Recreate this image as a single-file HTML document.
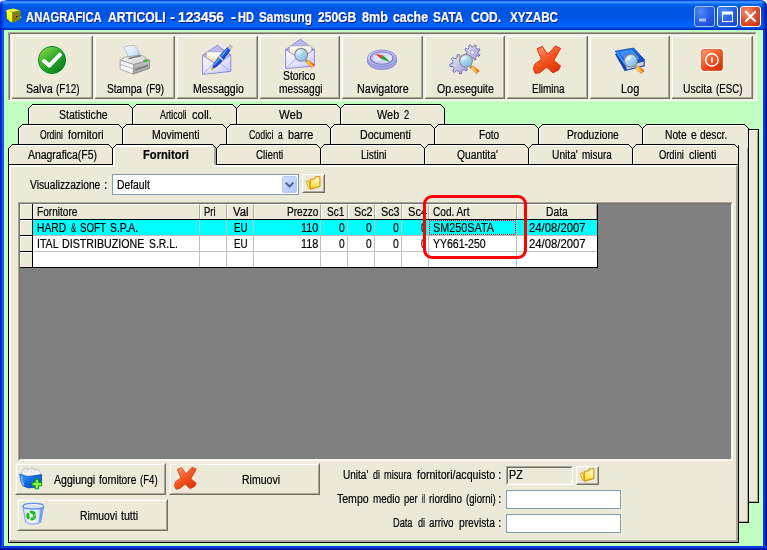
<!DOCTYPE html>
<html lang="it">
<head>
<meta charset="utf-8">
<title>ANAGRAFICA ARTICOLI</title>
<style>
html,body{margin:0;padding:0;}
body{width:767px;height:550px;overflow:hidden;background:#0a50e0;font-family:"Liberation Sans",sans-serif;font-size:12px;color:#000;}
#win{position:relative;width:767px;height:550px;overflow:hidden;background:#0a50e0;}
#win div,#win span,#win svg{position:absolute;box-sizing:border-box;}
/* window frame */
#frame-l{left:0;top:30px;width:4px;height:520px;background:linear-gradient(to right,#0019cf 0,#0019cf 1px,#0831d9 1px,#0831d9 2px,#166aee 2px,#166aee 3px,#0855dd 3px,#0855dd 4px);}
#frame-r{left:763px;top:30px;width:4px;height:520px;background:linear-gradient(to right,#0b3ee8 0,#0838e4 2px,#001fae 2px,#001fae 3px,#00138e 3px,#00138e 4px);}
#frame-b{left:0;top:546px;width:767px;height:4px;background:linear-gradient(to bottom,#0b3ee8 0,#0838e4 2px,#001fae 2px,#001fae 3px,#00138e 3px,#00138e 4px);}
#client{left:4px;top:30px;width:759px;height:516px;background:#c0ffc0;}
/* title bar */
#title{left:0;top:0;width:767px;height:30px;border-radius:7px 7px 0 0;
 background:linear-gradient(to bottom,#0a48d6 0px,#0a48d6 1px,#2d82f8 1px,#3a90ff 2.5px,#1a78f6 3.5px,#0a68ee 4.5px,#035ce6 6px,#0055e2 8px,#0054e2 14px,#0057e8 18px,#005df2 21px,#0062fb 24px,#0064ff 26px,#005cf0 27.5px,#003cd2 28.5px,#0029ba 30px);}
#title-edge-l{left:0;top:0;width:4px;height:30px;border-radius:7px 0 0 0;background:linear-gradient(to right,#0019cf,rgba(0,40,210,0));}
#title-edge-r{left:761px;top:0;width:6px;height:30px;border-radius:0 7px 0 0;background:linear-gradient(to right,rgba(0,30,180,0),#001a9e);}
.corner{width:8px;height:8px;top:0;background:#fff;}
.wb{top:6px;width:21px;height:21px;border-radius:3px;border:1px solid #fff;}
#wb-min,#wb-max{background:radial-gradient(circle at 30% 25%,#4f8df5 0%,#2a63e6 45%,#1842c8 100%);}
#wb-min{left:694px;border-color:#a9c2f5;}
#wb-max{left:717px;}
#wb-close{left:740px;background:radial-gradient(circle at 30% 25%,#f0977c 0%,#e0502c 45%,#c2340e 100%);}
/* text */
.t{white-space:nowrap;line-height:20px;height:20px;transform-origin:0 0;-webkit-text-stroke:0.2px currentColor;}
.tt{text-shadow:1px 1px 0 #0a1883;}
/* toolbar */
#tb{left:8px;top:32px;width:749px;height:69px;background:#ece9d8;border:1px solid;border-color:#aca899 #fff #fff #aca899;}
#tb:before{content:"";position:absolute;left:0;top:0;right:0;bottom:0;border:1px solid;border-color:#716f64 #f1efe2 #f1efe2 #716f64;}
.btn{background:
 linear-gradient(#716f64,#716f64) right 0 top 2px/1px calc(100% - 2px) no-repeat,
 linear-gradient(#716f64,#716f64) left 2px bottom 0/calc(100% - 2px) 1px no-repeat,
 linear-gradient(#aca899,#aca899) right 1px top 3px/1px calc(100% - 4px) no-repeat,
 linear-gradient(#aca899,#aca899) left 3px bottom 1px/calc(100% - 4px) 1px no-repeat,
 linear-gradient(#fff,#fff) 2px 2px/calc(100% - 4px) 1px no-repeat,
 linear-gradient(#fff,#fff) 2px 2px/1px calc(100% - 4px) no-repeat,
 linear-gradient(#f1efe2,#f1efe2) 0 0/100% 2px no-repeat,
 linear-gradient(#f1efe2,#f1efe2) 0 0/2px 100% no-repeat,
 #ece9d8;}
.sbtn{background:#ece9d8;border:1px solid;border-color:#fff #716f64 #716f64 #fff;}
.sbtn:before{content:"";position:absolute;left:0;top:0;right:0;bottom:0;border:1px solid;border-color:#f1efe2 #aca899 #aca899 #f1efe2;}
/* pages */
.page{background:#ece9d8;border:1px solid #000;}
/* grid */
#gridbox{left:18px;top:202px;width:715px;height:259px;background:#808080;border:1px solid;border-color:#aca899 #fff #fff #aca899;}
#gridbox:before{content:"";position:absolute;left:0;top:0;right:0;bottom:0;border:1px solid;border-color:#716f64 #f1efe2 #f1efe2 #716f64;}
.hd{background:#ece9d8;border-left:1px solid #fff;border-top:1px solid #fff;border-right:1px solid #aca899;}
.cell{background:#fff;border-right:1px solid #c0c0c0;border-bottom:1px solid #c0c0c0;}
.cy{background:#00ffff;}
.edit{background:#fff;border:1px solid #7f9db9;}
.ind{background:#ece9d8;border-left:1px solid #fff;border-top:1px solid #fff;}
.vl{top:220px;width:1px;height:47px;background:#c0c0c0;}
#txt{left:0;top:0;width:767px;height:550px;will-change:transform;}
.btn2{background:#ece9d8;border:1px solid;border-color:#f1efe2 #716f64 #716f64 #f1efe2;}
.btn2:before{content:"";position:absolute;left:0;top:0;right:0;bottom:0;border:1px solid;border-color:#fff #aca899 #aca899 #fff;}

</style>
</head>
<body>
<div id="win">
 <div id="client"></div>
 <div id="frame-l"></div><div id="frame-r"></div><div id="frame-b"></div>
 <!-- title bar -->
 <div class="corner" style="left:0"></div><div class="corner" style="left:759px"></div>
 <div id="title"></div><div id="title-edge-l"></div><div id="title-edge-r"></div>
 <div id="wb-min" class="wb"></div><div id="wb-max" class="wb"></div><div id="wb-close" class="wb"></div>
  <svg style="left:0;top:0" width="767" height="30" viewBox="0 0 767 30">
  <!-- app icon: yellow cube -->
  <path d="M6.4 10.2L13 8.4L20.6 10.4L12.2 12Z" fill="#ffff00"/>
  <path d="M6.4 10.2L12.2 12L12.2 22.6L10 21.6L7 18.6Z" fill="#ffff00"/>
  <path d="M12.2 11.8L20.6 10.4L20.6 19.2L14 22.6L12.2 22.6Z" fill="#808000"/>
  <path d="M6.2 10.2L10 9.6L10 10.8L6.2 11.2ZM13 10L15.6 10.4L15.6 11.6L13 11.4ZM11.4 12.4L12.2 12.4L12.2 17.4L11.4 17.4Z" fill="#e8e8e8"/>
  <path d="M8 14.5L9 15.5M8.6 18L9.6 19.4" stroke="#c8c800" stroke-width="1"/>
  <rect x="16" y="16" width="1.2" height="1.2" fill="#000"/>
  <rect x="20.2" y="16.4" width="1" height="1.4" fill="#e0e0e0"/>
  <!-- minimize glyph -->
  <rect x="699" y="18.5" width="7" height="3" fill="#a9bdf2"/>
  <!-- maximize glyph -->
  <rect x="722.5" y="12.5" width="10" height="9" fill="none" stroke="#fff" stroke-width="1"/><rect x="722" y="11.5" width="11" height="3" fill="#fff"/>
  <!-- close glyph -->
  <path d="M746 12L755 21M755 12L746 21" stroke="#fff" stroke-width="2.2" stroke-linecap="round"/>
 </svg>

 <!-- toolbar -->
 <div id="tb"></div>
 <div class="btn" style="left:10px;top:34px;width:83px;height:65px"></div>
 <div class="btn" style="left:93px;top:34px;width:82px;height:65px"></div>
 <div class="btn" style="left:175px;top:34px;width:83px;height:65px"></div>
 <div class="btn" style="left:258px;top:34px;width:82px;height:65px"></div>
 <div class="btn" style="left:340px;top:34px;width:83px;height:65px"></div>
 <div class="btn" style="left:423px;top:34px;width:82px;height:65px"></div>
 <div class="btn" style="left:505px;top:34px;width:83px;height:65px"></div>
 <div class="btn" style="left:588px;top:34px;width:82px;height:65px"></div>
 <div class="btn" style="left:670px;top:34px;width:83px;height:65px"></div>
 <svg id="tabs" style="left:0;top:0" width="767" height="550" viewBox="0 0 767 550" shape-rendering="crispEdges">
<rect x="748" y="129" width="11" height="374" fill="#000"/>
<rect x="749" y="130" width="9" height="372" fill="#ece9d8"/>
<rect x="749" y="130" width="9" height="1" fill="#fff"/>
<rect x="749" y="130" width="1" height="372" fill="#f6f4ea"/>
<rect x="757" y="131" width="1" height="371" fill="#aca899"/>
<rect x="749" y="501" width="9" height="1" fill="#aca899"/>
<path d="M28.5 124.5V108.5L32.5 104.5H128.5L132.5 108.5V124.5" fill="#ece9d8" stroke="#000"/><path d="M29.5 124V108.5L32.5 105.5H128" fill="none" stroke="#fff"/>
<path d="M132.5 124.5V108.5L136.5 104.5H232.5L236.5 108.5V124.5" fill="#ece9d8" stroke="#000"/><path d="M133.5 124V108.5L136.5 105.5H232" fill="none" stroke="#fff"/>
<path d="M236.5 124.5V108.5L240.5 104.5H336.5L340.5 108.5V124.5" fill="#ece9d8" stroke="#000"/><path d="M237.5 124V108.5L240.5 105.5H336" fill="none" stroke="#fff"/>
<path d="M340.5 124.5V108.5L344.5 104.5H440.5L444.5 108.5V124.5" fill="#ece9d8" stroke="#000"/><path d="M341.5 124V108.5L344.5 105.5H440" fill="none" stroke="#fff"/>
<rect x="738" y="128" width="11" height="395" fill="#000"/>
<rect x="739" y="128" width="9" height="394" fill="#ece9d8"/>
<rect x="747" y="148" width="1" height="374" fill="#aca899"/>
<rect x="739" y="521" width="9" height="1" fill="#aca899"/>
<rect x="29" y="124" width="419" height="5" fill="#ece9d8"/>
<rect x="28" y="124" width="1" height="1" fill="#000"/>
<path d="M18.5 144.5V128.5L22.5 124.5H118.5L122.5 128.5V144.5" fill="#ece9d8" stroke="#000"/><path d="M19.5 144V128.5L22.5 125.5H118" fill="none" stroke="#fff"/>
<path d="M122.5 144.5V128.5L126.5 124.5H222.5L226.5 128.5V144.5" fill="#ece9d8" stroke="#000"/><path d="M123.5 144V128.5L126.5 125.5H222" fill="none" stroke="#fff"/>
<path d="M226.5 144.5V128.5L230.5 124.5H326.5L330.5 128.5V144.5" fill="#ece9d8" stroke="#000"/><path d="M227.5 144V128.5L230.5 125.5H326" fill="none" stroke="#fff"/>
<path d="M330.5 144.5V128.5L334.5 124.5H430.5L434.5 128.5V144.5" fill="#ece9d8" stroke="#000"/><path d="M331.5 144V128.5L334.5 125.5H430" fill="none" stroke="#fff"/>
<path d="M434.5 144.5V128.5L438.5 124.5H534.5L538.5 128.5V144.5" fill="#ece9d8" stroke="#000"/><path d="M435.5 144V128.5L438.5 125.5H534" fill="none" stroke="#fff"/>
<path d="M538.5 144.5V128.5L542.5 124.5H638.5L642.5 128.5V144.5" fill="#ece9d8" stroke="#000"/><path d="M539.5 144V128.5L542.5 125.5H638" fill="none" stroke="#fff"/>
<path d="M642.5 144.5V128.5L646.5 124.5H744.5L748.5 128.5V144.5" fill="#ece9d8" stroke="#000"/><path d="M643.5 144V128.5L646.5 125.5H744" fill="none" stroke="#fff"/>
<rect x="8" y="164" width="731" height="379" fill="#000"/>
<rect x="9" y="165" width="729" height="377" fill="#ece9d8"/>
<rect x="9" y="165" width="727" height="2" fill="#fff"/>
<rect x="9" y="165" width="2" height="375" fill="#fff"/>
<rect x="736" y="166" width="2" height="376" fill="#aca899"/>
<rect x="10" y="540" width="728" height="2" fill="#aca899"/>
<rect x="9" y="541" width="1" height="1" fill="#fff"/>
<rect x="19" y="144" width="719" height="5" fill="#ece9d8"/>
<rect x="18" y="144" width="1" height="1" fill="#000"/>
<path d="M8.5 164.5V148.5L12.5 144.5H108.5L112.5 148.5V164.5" fill="#ece9d8" stroke="#000"/><path d="M9.5 164V148.5L12.5 145.5H108" fill="none" stroke="#fff"/>
<path d="M216.5 164.5V148.5L220.5 144.5H316.5L320.5 148.5V164.5" fill="#ece9d8" stroke="#000"/><path d="M217.5 164V148.5L220.5 145.5H316" fill="none" stroke="#fff"/>
<path d="M320.5 164.5V148.5L324.5 144.5H420.5L424.5 148.5V164.5" fill="#ece9d8" stroke="#000"/><path d="M321.5 164V148.5L324.5 145.5H420" fill="none" stroke="#fff"/>
<path d="M424.5 164.5V148.5L428.5 144.5H524.5L528.5 148.5V164.5" fill="#ece9d8" stroke="#000"/><path d="M425.5 164V148.5L428.5 145.5H524" fill="none" stroke="#fff"/>
<path d="M528.5 164.5V148.5L532.5 144.5H628.5L632.5 148.5V164.5" fill="#ece9d8" stroke="#000"/><path d="M529.5 164V148.5L532.5 145.5H628" fill="none" stroke="#fff"/>
<path d="M632.5 164.5V148.5L636.5 144.5H734.5L738.5 148.5V164.5" fill="#ece9d8" stroke="#000"/><path d="M633.5 164V148.5L636.5 145.5H734" fill="none" stroke="#fff"/>
<path d="M112.5 167V148.5L116.5 144.5H212.5L216.5 148.5V167" fill="#ece9d8" stroke="none"/>
<rect x="113" y="148" width="103" height="19" fill="#ece9d8"/>
<path d="M112.5 148.5L116.5 144.5H212.5L216.5 148.5" fill="none" stroke="#000"/>
<path d="M114 167V148.5L116.5 146H212.5" fill="none" stroke="#fff" stroke-width="2"/>
<rect x="214" y="148" width="2" height="17" fill="#aca899"/>
<rect x="214" y="165" width="3" height="2" fill="#fff"/>
<path d="M213 146L215.5 148.5" fill="none" stroke="#aca899" stroke-width="1"/>
<rect x="216" y="148" width="1" height="17" fill="#000"/>
<rect x="8" y="164" width="105" height="1" fill="#000"/>
<rect x="216" y="164" width="523" height="1" fill="#000"/>
</svg>
  <!-- combo -->
 <div class="edit" style="left:112px;top:174px;width:187px;height:21px"></div>
 <div id="dd" style="left:282px;top:176px;width:15px;height:17px;border-radius:2px;background:linear-gradient(135deg,#d0dcfe 0%,#c2d3fc 45%,#aec6f8 100%);border:1px solid #b4c8f6"></div>
 <svg style="left:282px;top:176px" width="15" height="17" viewBox="0 0 15 17"><path d="M3.6 6.6L7.5 10.5L11.4 6.6" fill="none" stroke="#4d6185" stroke-width="2"/></svg>
 <div class="sbtn" style="left:302px;top:174px;width:23px;height:19px"></div>
 <!-- grid -->
 <div id="gridbox"></div>
 <div style="left:20px;top:204px;width:578px;height:64px;background:#fff"></div>
 <!-- indicator column -->
 <div style="left:20px;top:204px;width:13px;height:64px;background:#000"></div>
 <div class="ind" style="left:20px;top:204px;width:12px;height:15px"></div>
 <div class="ind" style="left:20px;top:220px;width:12px;height:15px"></div>
 <div class="ind" style="left:20px;top:236px;width:12px;height:15px"></div>
 <div class="ind" style="left:20px;top:252px;width:12px;height:15px"></div>
 <!-- header -->
 <div style="left:33px;top:204px;width:564px;height:15px;background:#ece9d8"></div>
 <div class="hd" style="left:33px;top:204px;width:167px;height:15px"></div>
 <div class="hd" style="left:200px;top:204px;width:27px;height:15px"></div>
 <div class="hd" style="left:227px;top:204px;width:27px;height:15px"></div>
 <div class="hd" style="left:254px;top:204px;width:67px;height:15px"></div>
 <div class="hd" style="left:321px;top:204px;width:27px;height:15px"></div>
 <div class="hd" style="left:348px;top:204px;width:27px;height:15px"></div>
 <div class="hd" style="left:375px;top:204px;width:27px;height:15px"></div>
 <div class="hd" style="left:402px;top:204px;width:27px;height:15px"></div>
 <div class="hd" style="left:429px;top:204px;width:88px;height:15px"></div>
 <div class="hd" style="left:517px;top:204px;width:80px;height:15px"></div>
 <div style="left:33px;top:219px;width:564px;height:1px;background:#000"></div>
 <!-- rows -->
 <div style="left:33px;top:220px;width:564px;height:15px;background:#00ffff"></div>
 <div style="left:33px;top:235px;width:564px;height:1px;background:#c0c0c0"></div>
 <div style="left:33px;top:251px;width:564px;height:1px;background:#c0c0c0"></div>
 <div class="vl" style="left:199px"></div><div class="vl" style="left:226px"></div><div class="vl" style="left:253px"></div>
 <div class="vl" style="left:320px"></div><div class="vl" style="left:347px"></div><div class="vl" style="left:374px"></div>
 <div class="vl" style="left:401px"></div><div class="vl" style="left:428px"></div><div class="vl" style="left:516px"></div>
 <div style="left:597px;top:204px;width:1px;height:64px;background:#000"></div>
 <div style="left:20px;top:267px;width:578px;height:1px;background:#000"></div>
 <!-- focus rect -->
 <div style="left:429px;top:220px;width:87px;height:15px;border:1px dotted #ff0000"></div>
 <!-- bottom buttons -->
 <div class="btn2" style="left:15px;top:463px;width:151px;height:32px"></div>
 <div class="btn2" style="left:169px;top:463px;width:151px;height:32px"></div>
 <div class="btn2" style="left:17px;top:499px;width:151px;height:32px"></div>
 <!-- fields -->
 <div id="pz" style="left:506px;top:466px;width:67px;height:19px;background:#ece9d8;border:1px solid;border-color:#aca899 #fff #fff #aca899"></div>
 <div style="left:507px;top:467px;width:65px;height:17px;border:1px solid;border-color:#716f64 #f1efe2 #f1efe2 #716f64"></div>
 <div class="sbtn" style="left:576px;top:466px;width:23px;height:19px"></div>
 <div class="edit" style="left:506px;top:490px;width:115px;height:19px"></div>
 <div class="edit" style="left:506px;top:514px;width:115px;height:19px"></div>

  <svg id="icons" style="left:0;top:0" width="767" height="550" viewBox="0 0 767 550">
 <defs>
  <linearGradient id="gGreen" x1="0.15" y1="0.1" x2="0.85" y2="0.9"><stop offset="0" stop-color="#7fd24a"/><stop offset="0.45" stop-color="#2fae2a"/><stop offset="1" stop-color="#0b7d1d"/></linearGradient>
  <linearGradient id="gRed" x1="0.2" y1="0.1" x2="0.8" y2="0.9"><stop offset="0" stop-color="#ff8c5e"/><stop offset="0.5" stop-color="#f4521f"/><stop offset="1" stop-color="#dc3608"/></linearGradient>
  <linearGradient id="gLens" x1="0.2" y1="0.1" x2="0.8" y2="0.9"><stop offset="0" stop-color="#d8f0fa"/><stop offset="0.5" stop-color="#a6d3ee"/><stop offset="1" stop-color="#86bce4"/></linearGradient>
  <linearGradient id="gHandle" x1="0" y1="0" x2="1" y2="0"><stop offset="0" stop-color="#ffd23a"/><stop offset="0.5" stop-color="#ff8a1e"/><stop offset="1" stop-color="#f0501a"/></linearGradient>
  <linearGradient id="gEnv" x1="0" y1="0" x2="1" y2="1"><stop offset="0" stop-color="#fafaff"/><stop offset="0.6" stop-color="#e2e0fc"/><stop offset="1" stop-color="#c2c0f4"/></linearGradient>
  <linearGradient id="gPaper" x1="0" y1="0" x2="0" y2="1"><stop offset="0" stop-color="#ffffff"/><stop offset="1" stop-color="#ffdc9a"/></linearGradient>
  <linearGradient id="gPen" x1="0" y1="0" x2="1" y2="1"><stop offset="0" stop-color="#4a8af8"/><stop offset="0.5" stop-color="#0f4fd0"/><stop offset="1" stop-color="#0a2f9a"/></linearGradient>
  <linearGradient id="gBook" x1="0" y1="0" x2="1" y2="1"><stop offset="0" stop-color="#2f86f4"/><stop offset="0.6" stop-color="#0f5bd8"/><stop offset="1" stop-color="#0a3fae"/></linearGradient>
  <linearGradient id="gFold" x1="0" y1="0" x2="1" y2="1"><stop offset="0" stop-color="#fffbd0"/><stop offset="0.6" stop-color="#ffe35a"/><stop offset="1" stop-color="#f2b81a"/></linearGradient>
  <linearGradient id="gBin" x1="0" y1="0" x2="1" y2="0"><stop offset="0" stop-color="#cfe0fc"/><stop offset="0.4" stop-color="#ffffff"/><stop offset="0.7" stop-color="#dfe9fd"/><stop offset="1" stop-color="#8db4f6"/></linearGradient>
  <linearGradient id="gBox" x1="0" y1="0" x2="1" y2="1"><stop offset="0" stop-color="#4aa0ff"/><stop offset="0.5" stop-color="#1268e0"/><stop offset="1" stop-color="#0a3fb0"/></linearGradient>
  <linearGradient id="gGear" x1="0" y1="0" x2="1" y2="1"><stop offset="0" stop-color="#ececfa"/><stop offset="1" stop-color="#9c9cd6"/></linearGradient>
  <linearGradient id="gCompass" x1="0" y1="0" x2="1" y2="1"><stop offset="0" stop-color="#e6e6fc"/><stop offset="1" stop-color="#9a9ade"/></linearGradient>
  <linearGradient id="gFace" x1="0" y1="0" x2="1" y2="0"><stop offset="0" stop-color="#b4b4e6"/><stop offset="1" stop-color="#ececfe"/></linearGradient>
  <linearGradient id="gFold2" x1="0.9" y1="0" x2="0.3" y2="1"><stop offset="0" stop-color="#fffef0"/><stop offset="0.45" stop-color="#fff08a"/><stop offset="1" stop-color="#ffd828"/></linearGradient>
  <linearGradient id="gSheet" x1="0" y1="0" x2="1" y2="1"><stop offset="0" stop-color="#ffffff"/><stop offset="0.5" stop-color="#d8eafc"/><stop offset="1" stop-color="#a8ccf4"/></linearGradient>
  <linearGradient id="gPrTop" x1="0" y1="0" x2="1" y2="1"><stop offset="0" stop-color="#f2f2f2"/><stop offset="1" stop-color="#cfcfcf"/></linearGradient>
  <linearGradient id="gPrL" x1="0" y1="0" x2="0" y2="1"><stop offset="0" stop-color="#e4e4e4"/><stop offset="0.5" stop-color="#ffffff"/><stop offset="1" stop-color="#f0f0f0"/></linearGradient>
  <linearGradient id="gPrR" x1="0" y1="0" x2="0" y2="1"><stop offset="0" stop-color="#c8c8c8"/><stop offset="1" stop-color="#9c9c9c"/></linearGradient>
  <g id="magnifier"><path d="M4.6 5.6L11.2 11.4" stroke="#8a8a8a" stroke-width="3.2" stroke-linecap="butt"/><path d="M6.2 6.2L12.2 11.6" stroke="url(#gHandle)" stroke-width="4" /><path d="M6.6 7.4L11.6 11.9" stroke="#ffd84a" stroke-width="1.2"/><circle cx="0" cy="0" r="6.4" fill="url(#gLens)" stroke="#8c8c8c" stroke-width="1.2"/><ellipse cx="-2" cy="-2.6" rx="2.6" ry="1.6" fill="#fff" opacity=".55" transform="rotate(-30 -2 -2.6)"/></g>
  <g id="redx"><path d="M537 48.8L542.2 46.4L547.8 54.4L555.4 46L560.6 48.4L553.8 60.4L560.6 66L558.6 70L553 72.8L546.6 67.2L540.2 72.4L535.4 73.6L533.4 69.2L534.6 64.4L541.4 59.2Z" fill="url(#gRed)" stroke="#d63408" stroke-width="1" stroke-linejoin="round"/></g>
  <g id="folder"><path d="M0.2 5.4L3 4.8L4.2 12.9L2.4 11.6Z" fill="#fff2a8" stroke="#d8a018" stroke-width="1" stroke-linejoin="round"/><path d="M4.3 3.5L8.8 2.7L9.5 0.8L13.3 0.5L13.9 1.2L13.9 10.3L4.3 13.1Z" fill="url(#gFold2)" stroke="#d49a10" stroke-width="1.2" stroke-linejoin="round"/></g>
 </defs>
 <!-- Salva -->
 <circle cx="52" cy="60" r="13.6" fill="url(#gGreen)" stroke="#118a1c" stroke-width="1"/>
 <path d="M44 61L49.3 65.6L60 54.6" fill="none" stroke="#fff" stroke-width="4" stroke-linecap="round" stroke-linejoin="round"/>
 <!-- Stampa -->
 <g>
  <path d="M123.5 47.3Q129 45.2 134.4 45.5Q138.6 49 139.9 54.9L128.2 57.8Q127.2 51 123.5 47.3Z" fill="url(#gSheet)" stroke="#a4b4c8" stroke-width="0.8"/>
  <path d="M120.2 60L124.9 57.1L142.4 55.3L149.6 60.4L133.6 64.6Z" fill="url(#gPrTop)" stroke="#9a9a9a" stroke-width="0.8"/>
  <path d="M128 57.9L139.9 54.9L141.6 56.2L129.2 59.3Z" fill="#7c7c7c"/>
  <path d="M120.2 60L133.6 64.6L133.3 74.2L120.2 69.1Z" fill="url(#gPrL)" stroke="#9a9a9a" stroke-width="0.8"/>
  <path d="M133.6 64.6L149.6 60.4L149.6 68.4L133.3 74.2Z" fill="url(#gPrR)" stroke="#8a8a8a" stroke-width="0.8"/>
  <path d="M120.2 64.4L133.5 68.8L149.6 64" fill="none" stroke="#a0a0a0" stroke-width="0.8"/>
  <path d="M135.4 69L148.2 64.8L148.2 66.4L135.4 70.6Z" fill="#787878"/>
  <ellipse cx="145.6" cy="60.7" rx="2.1" ry="1.2" fill="#2ad026" stroke="#18a018" stroke-width=".3" transform="rotate(-12 145.6 60.7)"/>
 </g>
 <!-- Messaggio -->
 <g>
  <path d="M202.8 55L217.2 45.2L230.6 55Z" fill="#bcb8f0" stroke="#918ce2" stroke-width="1"/>
  <rect x="206.4" y="52" width="21.6" height="12" fill="url(#gPaper)" stroke="#b0a890" stroke-width="0.6"/>
  <path d="M202.6 55.2L202.6 74.4L230.8 71.4L230.8 54.8L217 64.6Z" fill="url(#gEnv)" stroke="#8e8ae2" stroke-width="1" stroke-linejoin="round"/>
  <path d="M202.6 74.4L214.5 62.8M230.8 71.4L219.6 62.8" stroke="#a6a2ea" stroke-width="0.9" fill="none"/>
  <path d="M214.0 68.3L218.2 65.2L222.4 60.9L226.1 56.2L229.6 51.3L230.4 50.0L227.3 47.5L226.2 48.5L222.1 52.9L218.2 57.5L214.8 62.4L212.6 67.1Z" fill="url(#gPen)" stroke="#0a2f9a" stroke-width=".5"/>
  <path d="M214.0 65.7L217.0 63.0L224.1 54.5L227.7 49.7L226.6 48.8L222.5 53.3L215.6 61.8L213.6 65.3Z" fill="#6aa6ff" opacity=".75"/>
  <path d="M211.6 70.1L214.0 68.3L212.6 67.1L211.2 69.9Z" fill="#d8a020" stroke="#a87808" stroke-width=".4"/>
  <path d="M230.1 49.8L232.4 46.5L230.4 44.8L227.5 47.7Z" fill="#c4c4d0" stroke="#8c8c98" stroke-width=".4"/>
  <path d="M222.5 60.8L223.5 59.5L219.3 56.0L218.3 57.3Z" fill="#d0d0dc"/>
 </g>
 <!-- Storico messaggi -->
 <g>
  <path d="M285.6 49.6L300.4 39.2L314.4 49.6Z" fill="#bcb8f0" stroke="#918ce2" stroke-width="1"/>
  <rect x="289.6" y="46" width="21.6" height="12" fill="url(#gPaper)" stroke="#b0a890" stroke-width="0.6"/>
  <path d="M285.6 49.4L285.6 68.6L314.4 66L314.4 49.2L300.4 59Z" fill="url(#gEnv)" stroke="#8e8ae2" stroke-width="1" stroke-linejoin="round"/>
  <path d="M285.6 68.6L297.8 57.2M314.4 66L303 57.2" stroke="#a6a2ea" stroke-width="0.9" fill="none"/>
  <use href="#magnifier" x="301.2" y="54.8"/>
 </g>
 <!-- Navigatore -->
 <g>
  <ellipse cx="382" cy="61" rx="14.6" ry="8.6" fill="#a4a4e0" stroke="#8a8ad2" stroke-width="1"/>
  <ellipse cx="382" cy="58.2" rx="14.6" ry="8.2" fill="url(#gCompass)" stroke="#9090d8" stroke-width="1"/>
  <ellipse cx="381.6" cy="58" rx="11.4" ry="6.2" fill="url(#gFace)" stroke="#7878c6" stroke-width="1.1"/>
  <ellipse cx="377" cy="58.4" rx="4.2" ry="3" fill="#f0f0ff" opacity=".7"/>
  <path d="M375.6 54L383 55.6L380.6 58.6Z" fill="#f03c1c"/>
  <path d="M380.6 58.6L383 55.6L390.8 62.4Z" fill="#1ea030"/>
 </g>
 <!-- Op.eseguite -->
 <g>
  <g transform="translate(472.4 52.4)"><path d="M5.49 1.11L7.46 2.26L6.73 3.94L4.54 3.27L3.09 4.67L3.68 6.88L1.97 7.55L0.90 5.53L-1.11 5.49L-2.26 7.46L-3.94 6.73L-3.27 4.54L-4.67 3.09L-6.88 3.68L-7.55 1.97L-5.53 0.90L-5.49 -1.11L-7.46 -2.26L-6.73 -3.94L-4.54 -3.27L-3.09 -4.67L-3.68 -6.88L-1.97 -7.55L-0.90 -5.53L1.11 -5.49L2.26 -7.46L3.94 -6.73L3.27 -4.54L4.67 -3.09L6.88 -3.68L7.55 -1.97L5.53 -0.90Z" fill="url(#gGear)" stroke="#7272b8" stroke-width="1" stroke-linejoin="round"/><circle r="2.1" fill="#f6f6ff" stroke="#8c8cd0" stroke-width=".9"/></g>
  <g transform="translate(459.4 64.2)"><path d="M6.30 3.04L8.21 4.97L6.83 6.75L4.49 5.37L2.30 6.61L2.29 9.32L0.05 9.60L-0.62 6.97L-3.04 6.30L-4.97 8.21L-6.75 6.83L-5.37 4.49L-6.61 2.30L-9.32 2.29L-9.60 0.05L-6.97 -0.62L-6.30 -3.04L-8.21 -4.97L-6.83 -6.75L-4.49 -5.37L-2.30 -6.61L-2.29 -9.32L-0.05 -9.60L0.62 -6.97L3.04 -6.30L4.97 -8.21L6.75 -6.83L5.37 -4.49L6.61 -2.30L9.32 -2.29L9.60 -0.05L6.97 0.62Z" fill="url(#gGear)" stroke="#7272b8" stroke-width="1" stroke-linejoin="round"/></g>
  <use href="#magnifier" x="466" y="60.8"/>
 </g>
 <!-- Elimina -->
 <use href="#redx"/>
 <!-- Log -->
 <g>
  <path d="M644.4 59.6L644.4 66L624.8 70.8L615.4 54.2L617 52.8L626.4 67.6Z" fill="#0a46b8" stroke="#0a3ea8" stroke-width=".6"/>
  <path d="M626.6 66.4L643.6 61.6L643.6 65.2L626.8 69.4Z" fill="#d4d4d8"/>
  <path d="M615.2 51.2L633.6 48L644.4 59.6L626 65.6Z" fill="url(#gBook)" stroke="#0a48c0" stroke-width=".8" stroke-linejoin="round"/>
  <path d="M620.4 52.6L631.8 50.6L639 58.6L627.6 62Z" fill="#3a8af4" stroke="#5aa2f8" stroke-width="1"/><path d="M616.4 52L626.8 66.6" stroke="#4a9cff" stroke-width="1.4"/>
  <use href="#magnifier" x="630.8" y="60.8"/>
 </g>
 <!-- Uscita -->
 <g>
  <rect x="700.5" y="48.5" width="23" height="23" rx="3" fill="#fff" opacity=".9"/>
  <rect x="701.5" y="49.5" width="21" height="21" rx="2.2" fill="url(#gRed)"/>
  <rect x="701.5" y="49.5" width="21" height="21" rx="2.2" fill="none" stroke="#c83410" stroke-width=".6"/>
  <circle cx="711.9" cy="59.9" r="6.2" fill="none" stroke="#fff" stroke-width="1.5"/>
  <rect x="711.1" y="57.2" width="1.7" height="5.6" fill="#fff"/>
 </g>
 <!-- Rimuovi (small red X) -->
 <use href="#redx" transform="translate(174.2 467.2) scale(0.8) translate(-533 -46)"/>
 <!-- folder buttons -->
 <use href="#folder" x="306" y="176"/>
 <use href="#folder" x="580" y="468"/>
 <!-- Aggiungi fornitore -->
 <g>
  <path d="M21.8 472.4L24.4 468.4L27.8 468.2L28.4 470L31 468.2L34.6 468.6L35.2 470.4L38.4 469.4L40.6 472.8L40 476L22.4 476Z" fill="#f4f4f4" stroke="#b8b8b8" stroke-width=".8" stroke-linejoin="round"/>
  <path d="M25 469.6L27.6 469.4L27.6 471.6L25 471.8ZM31.6 470L34.2 470L34.2 472.4L31.6 472.4Z" fill="#fff" stroke="#c8c8c8" stroke-width=".5"/>
  <path d="M19.8 474L27.6 476.8L41.6 474.6L41.6 481Q41 485 34 487.4Q28 488.8 23.6 486.2Q20.4 483 19.8 474Z" fill="url(#gBox)" stroke="#0a50c8" stroke-width=".8" stroke-linejoin="round"/>
  <path d="M21.2 476.2Q21.6 482 24 485" fill="none" stroke="#7ac0ff" stroke-width="1.4"/>
  <path d="M35.2 479.4L38.6 479.4L38.6 482.4L41.6 482.4L41.6 485.8L38.6 485.8L38.6 488.8L35.2 488.8L35.2 485.8L32.2 485.8L32.2 482.4L35.2 482.4Z" fill="#8cf04a" stroke="#10a014" stroke-width="1.1" stroke-linejoin="round"/>
 </g>
 <!-- Rimuovi tutti (recycle bin) -->
 <g>
  <path d="M23 506.6L25.8 522.4Q33 525.8 40.6 522.4L43.6 506.6Z" fill="url(#gBin)" stroke="#6a9ff6" stroke-width="1" stroke-linejoin="round"/>
  <path d="M41.6 508L39.4 522.4" stroke="#4a88f2" stroke-width="1.4" opacity=".8"/>
  <ellipse cx="33.3" cy="506.2" rx="10.4" ry="2.8" fill="#f8fbff" stroke="#5a92f4" stroke-width="1.3"/>
  <ellipse cx="33.3" cy="506.5" rx="7.6" ry="1.5" fill="#cfe0fb"/>
  <circle cx="31.2" cy="515.6" r="3.5" fill="none" stroke="#20b81e" stroke-width="3" stroke-dasharray="6 1.33"/>
  <circle cx="31.2" cy="515.6" r="1.3" fill="#eefaf0"/>
  <path d="M29.4 513.4L32 515.8L33.4 517.8" stroke="#e8fbe8" stroke-width=".9" fill="none"/>
 </g>
 </svg>

 <div id="txt">
<span class="t tt" style="left:26px;top:7px;transform:scaleX(0.8044);font-weight:bold;color:#fff;font-size:14px;">ANAGRAFICA</span>
<span class="t tt" style="left:108px;top:7px;transform:scaleX(0.8713);font-weight:bold;color:#fff;font-size:14px;">ARTICOLI</span>
<span class="t tt" style="left:170px;top:7px;transform:scaleX(1.0702);font-weight:bold;color:#fff;font-size:14px;">-</span>
<span class="t tt" style="left:178px;top:7px;transform:scaleX(0.9846);font-weight:bold;color:#fff;font-size:14px;">123456</span>
<span class="t tt" style="left:231px;top:7px;transform:scaleX(1.0702);font-weight:bold;color:#fff;font-size:14px;">-</span>
<span class="t tt" style="left:238px;top:7px;transform:scaleX(0.7907);font-weight:bold;color:#fff;font-size:14px;">HD</span>
<span class="t tt" style="left:259px;top:7px;transform:scaleX(0.8411);font-weight:bold;color:#fff;font-size:14px;">Samsung</span>
<span class="t tt" style="left:317.8px;top:7px;transform:scaleX(0.8611);font-weight:bold;color:#fff;font-size:14px;">250GB</span>
<span class="t tt" style="left:362px;top:7px;transform:scaleX(0.9029);font-weight:bold;color:#fff;font-size:14px;">8mb</span>
<span class="t tt" style="left:393px;top:7px;transform:scaleX(0.8815);font-weight:bold;color:#fff;font-size:14px;">cache</span>
<span class="t tt" style="left:433px;top:7px;transform:scaleX(0.8433);font-weight:bold;color:#fff;font-size:14px;">SATA</span>
<span class="t tt" style="left:471px;top:7px;transform:scaleX(0.8571);font-weight:bold;color:#fff;font-size:14px;">COD.</span>
<span class="t tt" style="left:510px;top:7px;transform:scaleX(0.8339);font-weight:bold;color:#fff;font-size:14px;">XYZABC</span>
<span class="t" style="left:25.6px;top:79px;transform:scaleX(0.8891);">Salva</span>
<span class="t" style="left:55.9px;top:79px;transform:scaleX(0.8196);">(F12)</span>
<span class="t" style="left:107px;top:79px;transform:scaleX(0.8462);">Stampa</span>
<span class="t" style="left:145.8px;top:79px;transform:scaleX(0.8227);">(F9)</span>
<span class="t" style="left:192.5px;top:79px;transform:scaleX(0.8771);">Messaggio</span>
<span class="t" style="left:282.9px;top:66px;transform:scaleX(0.8646);">Storico</span>
<span class="t" style="left:278.6px;top:79px;transform:scaleX(0.8489);">messaggi</span>
<span class="t" style="left:356.7px;top:79px;transform:scaleX(0.8892);">Navigatore</span>
<span class="t" style="left:436.5px;top:79px;transform:scaleX(0.8792);">Op.eseguite</span>
<span class="t" style="left:531.6px;top:79px;transform:scaleX(0.8283);">Elimina</span>
<span class="t" style="left:621.4px;top:79px;transform:scaleX(0.9086);">Log</span>
<span class="t" style="left:682.7px;top:79px;transform:scaleX(0.8697);">Uscita</span>
<span class="t" style="left:715.8px;top:79px;transform:scaleX(0.8080);">(ESC)</span>
<span class="t" style="left:58.5px;top:105px;transform:scaleX(0.8779);">Statistiche</span>
<span class="t" style="left:159.9px;top:105px;transform:scaleX(0.7386);">Articoli</span>
<span class="t" style="left:191.7px;top:105px;transform:scaleX(0.9370);">coll.</span>
<span class="t" style="left:279.2px;top:105px;transform:scaleX(0.9522);">Web</span>
<span class="t" style="left:377.4px;top:105px;transform:scaleX(0.9073);">Web</span>
<span class="t" style="left:404.3px;top:105px;transform:scaleX(0.7776);">2</span>
<span class="t" style="left:39.6px;top:125px;transform:scaleX(0.7184);">Ordini</span>
<span class="t" style="left:67.8px;top:125px;transform:scaleX(0.8922);">fornitori</span>
<span class="t" style="left:151.6px;top:125px;transform:scaleX(0.8704);">Movimenti</span>
<span class="t" style="left:248.6px;top:125px;transform:scaleX(0.7344);">Codici</span>
<span class="t" style="left:278.3px;top:125px;transform:scaleX(0.7028);">a</span>
<span class="t" style="left:287.7px;top:125px;transform:scaleX(0.9031);">barre</span>
<span class="t" style="left:359.7px;top:125px;transform:scaleX(0.8856);">Documenti</span>
<span class="t" style="left:478.9px;top:125px;transform:scaleX(0.8411);">Foto</span>
<span class="t" style="left:567px;top:125px;transform:scaleX(0.8531);">Produzione</span>
<span class="t" style="left:664.5px;top:125px;transform:scaleX(0.8518);">Note</span>
<span class="t" style="left:690.5px;top:125px;transform:scaleX(0.8673);">e</span>
<span class="t" style="left:700.1px;top:125px;transform:scaleX(0.8496);">descr.</span>
<span class="t" style="left:28px;top:145px;transform:scaleX(0.8693);">Anagrafica(F5)</span>
<span class="t" style="left:142.6px;top:145px;transform:scaleX(0.9305);font-weight:bold;">Fornitori</span>
<span class="t" style="left:255.9px;top:145px;transform:scaleX(0.8184);">Clienti</span>
<span class="t" style="left:360.7px;top:145px;transform:scaleX(0.8342);">Listini</span>
<span class="t" style="left:456.6px;top:145px;transform:scaleX(0.8582);">Quantita&#x27;</span>
<span class="t" style="left:551.6px;top:145px;transform:scaleX(0.8511);">Unita&#x27;</span>
<span class="t" style="left:581.6px;top:145px;transform:scaleX(0.8246);">misura</span>
<span class="t" style="left:659.3px;top:145px;transform:scaleX(0.7777);">Ordini</span>
<span class="t" style="left:689px;top:145px;transform:scaleX(0.8929);">clienti</span>
<span class="t" style="left:30.4px;top:175px;transform:scaleX(0.8521);">Visualizzazione</span>
<span class="t" style="left:103.6px;top:175px;transform:scaleX(1.0168);">:</span>
<span class="t" style="left:117.1px;top:175px;transform:scaleX(0.8624);">Default</span>
<span class="t" style="left:36.6px;top:202px;transform:scaleX(0.8411);">Fornitore</span>
<span class="t" style="left:204px;top:202px;transform:scaleX(0.7838);">Pri</span>
<span class="t" style="left:232.8px;top:202px;transform:scaleX(0.9481);">Val</span>
<span class="t" style="left:286.7px;top:202px;transform:scaleX(0.8405);">Prezzo</span>
<span class="t" style="left:326.8px;top:202px;transform:scaleX(0.8363);">Sc1</span>
<span class="t" style="left:353.5px;top:202px;transform:scaleX(0.8991);">Sc2</span>
<span class="t" style="left:380.5px;top:202px;transform:scaleX(0.8991);">Sc3</span>
<span class="t" style="left:407.8px;top:202px;transform:scaleX(0.9281);">Sc4</span>
<span class="t" style="left:433px;top:202px;transform:scaleX(0.8406);">Cod. Art</span>
<span class="t" style="left:546.1px;top:202px;transform:scaleX(0.8557);">Data</span>
<span class="t" style="left:36.7px;top:218px;transform:scaleX(0.8584);">HARD</span>
<span class="t" style="left:71.1px;top:218px;transform:scaleX(0.6487);">&amp;</span>
<span class="t" style="left:79.6px;top:218px;transform:scaleX(0.8094);">SOFT</span>
<span class="t" style="left:110.3px;top:218px;transform:scaleX(0.8685);">S.P.A.</span>
<span class="t" style="left:233.8px;top:218px;transform:scaleX(0.8157);">EU</span>
<span class="t" style="left:300.8px;top:218px;transform:scaleX(0.9038);">110</span>
<span class="t" style="left:339.2px;top:218px;transform:scaleX(0.8523);">0</span>
<span class="t" style="left:366.4px;top:218px;transform:scaleX(0.8523);">0</span>
<span class="t" style="left:393.2px;top:218px;transform:scaleX(0.8673);">0</span>
<span class="t" style="left:420.9px;top:218px;transform:scaleX(0.7626);">0</span>
<span class="t" style="left:433px;top:218px;transform:scaleX(0.9025);">SM250SATA</span>
<span class="t" style="left:528.6px;top:218px;transform:scaleX(0.9424);">24/08/2007</span>
<span class="t" style="left:36.7px;top:234px;transform:scaleX(0.8792);">ITAL</span>
<span class="t" style="left:62.3px;top:234px;transform:scaleX(0.8892);">DISTRIBUZIONE</span>
<span class="t" style="left:149.3px;top:234px;transform:scaleX(0.8633);">S.R.L.</span>
<span class="t" style="left:233.8px;top:234px;transform:scaleX(0.8157);">EU</span>
<span class="t" style="left:300.8px;top:234px;transform:scaleX(0.9038);">118</span>
<span class="t" style="left:339.2px;top:234px;transform:scaleX(0.8523);">0</span>
<span class="t" style="left:366.4px;top:234px;transform:scaleX(0.8523);">0</span>
<span class="t" style="left:393.2px;top:234px;transform:scaleX(0.8673);">0</span>
<span class="t" style="left:420.9px;top:234px;transform:scaleX(0.7626);">0</span>
<span class="t" style="left:432.5px;top:234px;transform:scaleX(0.8760);">YY661-250</span>
<span class="t" style="left:528.6px;top:234px;transform:scaleX(0.9424);">24/08/2007</span>
<span class="t" style="left:53.9px;top:470px;transform:scaleX(0.8819);">Aggiungi</span>
<span class="t" style="left:99px;top:470px;transform:scaleX(0.8471);">fornitore</span>
<span class="t" style="left:139.7px;top:470px;transform:scaleX(0.8000);">(F4)</span>
<span class="t" style="left:241.7px;top:470px;transform:scaleX(0.8767);">Rimuovi</span>
<span class="t" style="left:79.8px;top:506px;transform:scaleX(0.8606);">Rimuovi</span>
<span class="t" style="left:120.5px;top:506px;transform:scaleX(0.8788);">tutti</span>
<span class="t" style="left:342.6px;top:465px;transform:scaleX(0.8346);">Unita&#x27;</span>
<span class="t" style="left:373.1px;top:465px;transform:scaleX(0.7492);">di</span>
<span class="t" style="left:384.1px;top:465px;transform:scaleX(0.7691);">misura</span>
<span class="t" style="left:416.5px;top:465px;transform:scaleX(0.8870);">fornitori/acquisto</span>
<span class="t" style="left:497.9px;top:465px;transform:scaleX(1.0168);">:</span>
<span class="t" style="left:337.2px;top:489px;transform:scaleX(0.8770);">Tempo</span>
<span class="t" style="left:373.1px;top:489px;transform:scaleX(0.8260);">medio</span>
<span class="t" style="left:404px;top:489px;transform:scaleX(0.7899);">per</span>
<span class="t" style="left:422.4px;top:489px;transform:scaleX(0.5614);">il</span>
<span class="t" style="left:428.9px;top:489px;transform:scaleX(0.8219);">riordino</span>
<span class="t" style="left:465.8px;top:489px;transform:scaleX(0.7980);">(giorni)</span>
<span class="t" style="left:497.9px;top:489px;transform:scaleX(1.0168);">:</span>
<span class="t" style="left:393px;top:513px;transform:scaleX(0.7689);">Data</span>
<span class="t" style="left:418.1px;top:513px;transform:scaleX(0.7599);">di</span>
<span class="t" style="left:429.4px;top:513px;transform:scaleX(0.8196);">arrivo</span>
<span class="t" style="left:458.7px;top:513px;transform:scaleX(0.8541);">prevista</span>
<span class="t" style="left:497.9px;top:513px;transform:scaleX(1.0168);">:</span>
<span class="t" style="left:508.8px;top:465px;transform:scaleX(0.8994);">PZ</span>
 </div>
 <!-- red annotation -->
 <svg style="left:0;top:0" width="767" height="550" viewBox="0 0 767 550"><rect x="424.5" y="196.5" width="101" height="61" rx="7.5" ry="7.5" fill="none" stroke="#ff0000" stroke-width="3"/></svg>

</div>

</body>
</html>
